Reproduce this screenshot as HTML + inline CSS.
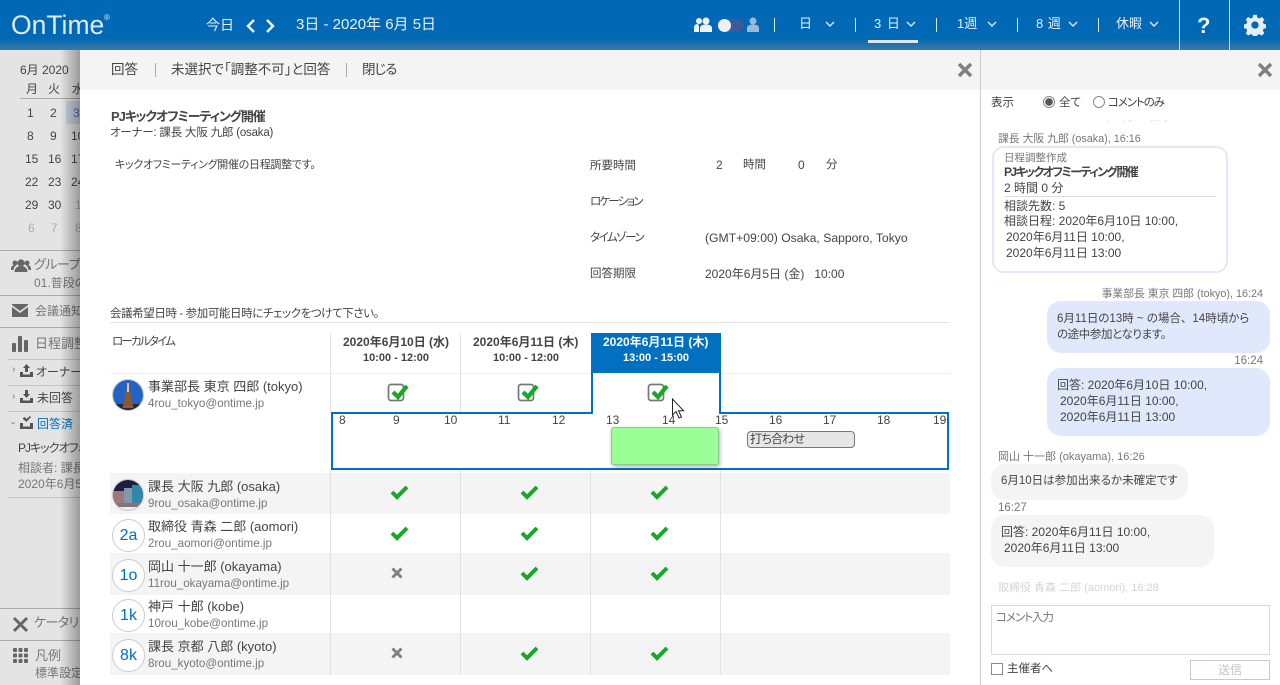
<!DOCTYPE html>
<html lang="ja"><head><meta charset="utf-8"><title>OnTime</title>
<style>
html,body{margin:0;padding:0}
body{width:1280px;height:685px;overflow:hidden;position:relative;background:#e4e4e4;font-family:"Liberation Sans","Noto Sans CJK JP",sans-serif;font-size:12px;color:#444;font-feature-settings:"palt"}
.a{position:absolute}
.t{position:absolute;white-space:nowrap;line-height:16px}
.g{color:#777}
.b{font-weight:bold}
.w{color:#e8f0f7}
.av{position:absolute;width:31px;height:31px;border-radius:50%;border:1px solid #ccc;background:#fff;color:#0070c0;font-size:16px;line-height:31px;text-align:center}
.row{position:absolute;left:110px;width:840px;background:#f4f4f4}
.vl{position:absolute;width:1px;background:#e2e2e2}
.s{position:absolute;top:18px;width:1px;height:14px;background:#dce8f2}
.n{position:absolute;top:16px;white-space:nowrap;line-height:16px;font-size:13px;color:#e8f0f7}
</style></head><body>

<!-- left background panel -->
<div class="a" style="left:0;top:50px;width:80px;height:635px;background:#e4e4e4;overflow:hidden">
  <div class="t" style="left:20px;top:12px">6月 2020</div>
  <div class="t" style="left:26px;top:31px">月</div><div class="t" style="left:48px;top:31px">火</div><div class="t" style="left:72px;top:31px">水</div>
  <div class="a" style="left:20px;top:48px;width:60px;height:1px;background:#aaa"></div>
  <div class="a" style="left:66px;top:51px;width:14px;height:23px;background:#c8d0e0"></div>
  <div class="t" style="left:27px;top:55px">1</div><div class="t" style="left:50px;top:55px">2</div><div class="t" style="left:73px;top:55px;color:#4a68a8">3</div>
  <div class="t" style="left:27px;top:78px">8</div><div class="t" style="left:50px;top:78px">9</div><div class="t" style="left:71px;top:78px">10</div>
  <div class="t" style="left:25px;top:101px">15</div><div class="t" style="left:48px;top:101px">16</div><div class="t" style="left:71px;top:101px">17</div>
  <div class="t" style="left:25px;top:124px">22</div><div class="t" style="left:48px;top:124px">23</div><div class="t" style="left:71px;top:124px">24</div>
  <div class="t" style="left:25px;top:147px">29</div><div class="t" style="left:48px;top:147px">30</div><div class="t" style="left:75px;top:147px;color:#aaa">1</div>
  <div class="t" style="left:28px;top:170px;color:#aaa">6</div><div class="t" style="left:51px;top:170px;color:#aaa">7</div><div class="t" style="left:75px;top:170px;color:#aaa">8</div>

  <div class="a" style="left:0;top:200px;width:80px;height:1px;background:#aaa"></div>
  <svg class="a" style="left:11px;top:208px" width="20" height="16" viewBox="0 0 20 16"><g fill="#666"><circle cx="10" cy="5" r="3.6"/><path d="M3.500 14c0-4 3-6 6.500-6s6.500 2 6.500 6z"/><circle cx="4" cy="5" r="2.500"/><circle cx="16" cy="5" r="2.500"/><path d="M0 11c0-2.500 1.500-4 4-4l1 .5c-1.500 1-2.500 2.500-2.500 4.500H0zM20 11c0-2.500-1.500-4-4-4l-1 .5c1.500 1 2.500 2.500 2.500 4.500H20z"/></g></svg>
  <div class="t g" style="left:34px;top:207px;font-size:13px;letter-spacing:-.5px">グループ</div>
  <div class="t g" style="left:34px;top:225px">01.普段の</div>
  <div class="a" style="left:0;top:245px;width:80px;height:1px;background:#aaa"></div>
  <svg class="a" style="left:12px;top:254px" width="16" height="13" viewBox="0 0 16 13"><path fill="#666" d="M0 1l8 6 8-6V0H0zM0 3v10h16V3L8 9z"/></svg>
  <div class="t g" style="left:35px;top:253px">会議通知</div>
  <div class="a" style="left:0;top:277px;width:80px;height:1px;background:#aaa"></div>
  <svg class="a" style="left:11px;top:285px" width="18" height="18" viewBox="0 0 18 18"><g fill="#666"><rect x="1" y="8" width="4" height="9" rx="1"/><rect x="7" y="1" width="4" height="16" rx="1"/><rect x="13" y="5" width="4" height="12" rx="1"/></g></svg>
  <div class="t g" style="left:35px;top:286px;font-size:13px">日程調整</div>
  <div class="a" style="left:8px;top:309px;width:72px;height:1px;background:#c4c4c4"></div>
  <div class="t g" style="left:12px;top:312px;font-size:10px">›</div>
  <svg class="a" style="left:20px;top:314px" width="13" height="13" viewBox="0 0 13 13"><path fill="#555" d="M6.500 0L10 4H8v4H5V4H3zM0 8h3v2.500h7V8h3v5H0z"/></svg>
  <div class="t" style="left:36px;top:314px">オーナー</div>
  <div class="a" style="left:8px;top:335px;width:72px;height:1px;background:#c4c4c4"></div>
  <div class="t g" style="left:12px;top:339px;font-size:10px">›</div>
  <svg class="a" style="left:20px;top:340px" width="13" height="13" viewBox="0 0 13 13"><path fill="#555" d="M5 0h3v4h2L6.500 8 3 4h2zM0 8h3v2.500h7V8h3v5H0z"/></svg>
  <div class="t" style="left:37px;top:340px">未回答</div>
  <div class="a" style="left:8px;top:361px;width:72px;height:1px;background:#c4c4c4"></div>
  <div class="t g" style="left:11px;top:365px;font-size:10px;transform:rotate(90deg)">›</div>
  <svg class="a" style="left:20px;top:366px" width="13" height="13" viewBox="0 0 13 13"><path fill="#555" d="M3 2l2-1 1.500 2L10 0l1 1-4.500 5L3 3zM0 7h3v3.500h7V7h3v6H0z"/></svg>
  <div class="t" style="left:37px;top:366px;color:#0070c0">回答済</div>
  <div class="t" style="left:18px;top:390px;letter-spacing:-1px">PJキックオフミ</div>
  <div class="t g" style="left:18px;top:410px">相談者: 課長</div>
  <div class="t g" style="left:18px;top:426px">2020年6月5</div>
  <div class="a" style="left:8px;top:447px;width:72px;height:1px;background:#c4c4c4"></div>
  <div class="a" style="left:0;top:558px;width:80px;height:1px;background:#aaa"></div>
  <svg class="a" style="left:12px;top:566px" width="17" height="17" viewBox="0 0 17 17"><path stroke="#666" stroke-width="3" d="M2 2l13 13M15 2L2 15"/></svg>
  <div class="t g" style="left:34px;top:565px;font-size:13px;letter-spacing:-.6px">ケータリング</div>
  <div class="a" style="left:0;top:590px;width:80px;height:1px;background:#aaa"></div>
  <svg class="a" style="left:13px;top:598px" width="15" height="15" viewBox="0 0 15 15"><g fill="#666"><rect width="4" height="4" rx="1"/><rect x="5.500" width="4" height="4" rx="1"/><rect x="11" width="4" height="4" rx="1"/><rect y="5.500" width="4" height="4" rx="1"/><rect x="5.500" y="5.500" width="4" height="4" rx="1"/><rect x="11" y="5.500" width="4" height="4" rx="1"/><rect y="11" width="4" height="4" rx="1"/><rect x="5.500" y="11" width="4" height="4" rx="1"/><rect x="11" y="11" width="4" height="4" rx="1"/></g></svg>
  <div class="t g" style="left:35px;top:598px;font-size:13px">凡例</div>
  <div class="t g" style="left:35px;top:615px">標準設定</div>
  <div class="a" style="left:60px;top:0;width:20px;height:635px;background:linear-gradient(90deg,rgba(0,0,0,0),rgba(0,0,0,.32))"></div>
</div>

<!-- header -->
<div class="a" style="left:0;top:0;width:1280px;height:50px;background:linear-gradient(#0068b4 0,#0068b4 38px,#3a78a8 50px)"></div>
<div class="t" style="left:11px;top:8px;font-size:26.500px;line-height:34px;color:#dfeaf3">OnTime</div>
<div class="t" style="left:104px;top:13px;font-size:8px;line-height:10px;color:#dfeaf3">®</div>
<div class="t w" style="left:206px;top:17px;font-size:14px">今日</div>
<svg class="a" style="left:245px;top:18px" width="32" height="16" viewBox="0 0 32 16"><path fill="none" stroke="#f0f5fa" stroke-width="2.500" d="M9 2L3 8l6 6M22 2l6 6-6 6"/></svg>
<div class="t w" style="left:296px;top:17px;font-size:15px">3日 - 2020年 6月 5日</div>
<svg class="a" style="left:694px;top:17px" width="20" height="16" viewBox="0 0 20 16"><g fill="#eef3f8"><circle cx="5" cy="4" r="3"/><path d="M0 15V10c0-2 2-3 4-3l1 2v6z"/><circle cx="12" cy="4" r="3.500"/><path d="M6 15v-4c0-2 2-3.500 6-3.500s6 1.500 6 3.500v4z"/></g></svg>
<div class="a" style="left:718px;top:19px;width:26px;height:13px;border-radius:7px;background:#3b5a9c"></div>
<div class="a" style="left:718px;top:19px;width:13px;height:13px;border-radius:50%;background:#f0f0f0"></div>
<svg class="a" style="left:745px;top:17px" width="16" height="16" viewBox="0 0 16 16"><g fill="#9db9d8"><circle cx="8" cy="4" r="3.500"/><path d="M2 15v-4c0-2 2-3.500 6-3.500s6 1.500 6 3.500v4z"/></g></svg>
<div class="s" style="left:774px"></div><div class="s" style="left:855px"></div><div class="s" style="left:936px"></div><div class="s" style="left:1017px"></div><div class="s" style="left:1098px"></div>
<div class="n" style="left:799px">日</div>
<div class="n" style="left:874px;letter-spacing:1px">3 日</div>
<div class="n" style="left:957px">1週</div>
<div class="n" style="left:1036px;letter-spacing:.5px">8 週</div>
<div class="n" style="left:1116px">休暇</div>
<svg class="a" style="left:0;top:0" width="1280" height="50" viewBox="0 0 1280 50"><g fill="none" stroke="#dce8f2" stroke-width="1.400"><path d="M826 22l4 4 4-4M907 22l4 4 4-4M988 22l4 4 4-4M1069 22l4 4 4-4M1150 22l4 4 4-4"/></g></svg>
<div class="a" style="left:868px;top:40px;width:50px;height:3px;background:#dfe6ea"></div>
<div class="a" style="left:1179px;top:0;width:1px;height:50px;background:#cfdde9"></div>
<div class="a" style="left:1229px;top:0;width:1px;height:50px;background:#cfdde9"></div>
<div class="t b" style="left:1197px;top:13px;font-size:22px;line-height:26px;color:#eef3f8">?</div>
<svg class="a" style="left:1244px;top:14px" width="22" height="22" viewBox="0 0 24 24"><path fill="#e6edf3" fill-rule="evenodd" d="M10 1h4l.6 3 2.200.9 2.600-1.700 2.800 2.800-1.700 2.600.9 2.200 3 .6v4l-3 .6-.9 2.200 1.700 2.600-2.800 2.800-2.600-1.700-2.200.9-.6 3h-4l-.6-3-2.200-.9-2.600 1.700-2.800-2.800 1.700-2.600-.9-2.200-3-.6v-4l3-.6.9-2.200-1.700-2.600 2.800-2.800 2.600 1.700 2.200-.9zM12 8a4 4 0 1 0 0 8 4 4 0 0 0 0-8z"/></svg>

<!-- modal -->
<div class="a" style="left:80px;top:50px;width:900px;height:635px;background:#fff"></div>
<div class="a" style="left:80px;top:50px;width:900px;height:40px;background:#f4f4f4"></div>
<div class="t" style="left:111px;top:62px;font-size:13.500px">回答</div>
<div class="a" style="left:155px;top:63px;width:1px;height:14px;background:#aaa"></div>
<div class="t" style="left:171px;top:62px;font-size:13.500px">未選択で「調整不可」と回答</div>
<div class="a" style="left:346px;top:63px;width:1px;height:14px;background:#aaa"></div>
<div class="t" style="left:362px;top:62px;font-size:13.500px;letter-spacing:-1px">閉じる</div>
<svg class="a" style="left:957px;top:62px" width="16" height="16" viewBox="0 0 16 16"><path stroke="#808080" stroke-width="3.500" d="M2 2l12 12M14 2L2 14"/></svg>

<div class="t b" style="left:111px;top:109px;font-size:13px;letter-spacing:-1.100px">PJキックオフミーティング開催</div>
<div class="t" style="left:110px;top:125px;font-size:11.500px;letter-spacing:-.2px">オーナー: 課長 大阪 九郎 (osaka)</div>
<div class="t" style="left:115px;top:157px;font-size:11px;letter-spacing:-.3px">キックオフミーティング開催の日程調整です。</div>

<div class="t" style="left:590px;top:158px;font-size:11.500px">所要時間</div>
<div class="t" style="left:716px;top:157px">2</div>
<div class="t" style="left:743px;top:157px;font-size:11.500px">時間</div>
<div class="t" style="left:798px;top:157px">0</div>
<div class="t" style="left:826px;top:157px;font-size:11.500px">分</div>
<div class="t" style="left:590px;top:194px;font-size:11.500px;letter-spacing:-1.800px">ロケーション</div>
<div class="t" style="left:590px;top:230px;font-size:11.500px;letter-spacing:-1.500px">タイムゾーン</div>
<div class="t" style="left:705px;top:230px;font-size:12.200px">(GMT+09:00) Osaka, Sapporo, Tokyo</div>
<div class="t" style="left:590px;top:266px;font-size:11.500px">回答期限</div>
<div class="t" style="left:705px;top:266px">2020年6月5日 (金) &nbsp; 10:00</div>

<div class="t" style="left:110px;top:306px;font-size:11.500px;letter-spacing:-.4px">会議希望日時 - 参加可能日時にチェックをつけて下さい。</div>
<div class="a" style="left:110px;top:322px;width:840px;height:1px;background:#e2e2e2"></div>

<!-- rows bg -->
<div class="a" style="left:110px;top:373px;width:840px;height:1px;background:#efefef"></div>
<div class="row" style="top:473px;height:41px"></div>
<div class="row" style="top:553px;height:42px"></div>
<div class="row" style="top:633px;height:42px"></div>
<!-- column lines -->
<div class="vl" style="left:330px;top:333px;height:80px"></div>
<div class="vl" style="left:460px;top:333px;height:80px"></div>
<div class="vl" style="left:330px;top:470px;height:205px"></div>
<div class="vl" style="left:460px;top:470px;height:205px"></div>
<div class="vl" style="left:590px;top:470px;height:205px"></div>
<div class="vl" style="left:720px;top:470px;height:205px"></div>

<div class="t" style="left:112px;top:334px;font-size:11.500px;letter-spacing:-1.800px">ローカルタイム</div>
<div class="t b" style="left:343px;top:334px">2020年6月10日 (水)</div>
<div class="t b" style="left:363px;top:350px;font-size:11px">10:00 - 12:00</div>
<div class="t b" style="left:473px;top:334px">2020年6月11日 (木)</div>
<div class="t b" style="left:493px;top:350px;font-size:11px">10:00 - 12:00</div>
<div class="a" style="left:591px;top:333px;width:130px;height:40px;background:#0070c0"></div>
<div class="t b" style="left:603px;top:334px;color:#fff">2020年6月11日 (木)</div>
<div class="t b" style="left:623px;top:350px;font-size:11px;color:#fff">13:00 - 15:00</div>

<!-- timeline frame -->
<div class="a" style="left:331px;top:412px;width:618px;height:58px;box-sizing:border-box;border:2px solid #0070c0;background:#fff"></div>
<div class="a" style="left:591px;top:373px;width:130px;height:41px;box-sizing:border-box;border:solid #0070c0;border-width:0 2px;background:#fff"></div>
<div class="t" style="left:339px;top:412px">8</div><div class="t" style="left:393px;top:412px">9</div><div class="t" style="left:444px;top:412px">10</div><div class="t" style="left:498px;top:412px">11</div><div class="t" style="left:552px;top:412px">12</div><div class="t" style="left:606px;top:412px">13</div><div class="t" style="left:662px;top:412px">14</div><div class="t" style="left:715px;top:412px">15</div><div class="t" style="left:769px;top:412px">16</div><div class="t" style="left:823px;top:412px">17</div><div class="t" style="left:877px;top:412px">18</div><div class="t" style="left:933px;top:412px">19</div>
<div class="a" style="left:611px;top:427px;width:108px;height:38px;box-sizing:border-box;background:#9bff98;border:1px solid #8cc98c;border-radius:3px;box-shadow:1px 2px 4px rgba(0,0,0,.3)"></div>
<div class="a" style="left:747px;top:431px;width:108px;height:17px;box-sizing:border-box;background:#e6e6e6;border:1px solid #777;border-radius:4px"></div>
<div class="t" style="left:750px;top:431px;letter-spacing:-.8px">打ち合わせ</div>

<!-- checkboxes -->
<svg class="a" style="left:387px;top:383px" width="22" height="19" viewBox="0 0 22 19"><rect x="1.500" y="1.500" width="15" height="16" rx="2.500" fill="none" stroke="#777" stroke-width="1.700"/><path fill="none" stroke="#17a828" stroke-width="4.200" d="M6 9l5 5 9-11"/></svg>
<svg class="a" style="left:517px;top:383px" width="22" height="19" viewBox="0 0 22 19"><rect x="1.500" y="1.500" width="15" height="16" rx="2.500" fill="none" stroke="#777" stroke-width="1.700"/><path fill="none" stroke="#17a828" stroke-width="4.200" d="M6 9l5 5 9-11"/></svg>
<svg class="a" style="left:647px;top:383px" width="22" height="19" viewBox="0 0 22 19"><rect x="1.500" y="1.500" width="15" height="16" rx="2.500" fill="none" stroke="#777" stroke-width="1.700"/><path fill="none" stroke="#17a828" stroke-width="4.200" d="M6 9l5 5 9-11"/></svg>
<svg class="a" style="left:671px;top:398px" width="14" height="22" viewBox="0 0 14 22"><path fill="#fff" stroke="#222" d="M1.500 1v16l3.500-3.500 3 6.500 2.500-1-3-6.300h5z"/></svg>

<!-- people -->
<svg class="a" style="left:112px;top:379px" width="32" height="32" viewBox="0 0 32 32"><defs><clipPath id="c1"><circle cx="16" cy="16" r="15"/></clipPath></defs><circle cx="16" cy="16" r="15.500" fill="#fff" stroke="#ccc"/><g clip-path="url(#c1)"><rect width="32" height="32" fill="#2462c4"/><rect y="25" width="32" height="7" fill="#1a2a3a"/><path fill="#8a5a30" d="M16 3l1.500 8 4 18h-11l4-18z"/><path fill="#e8c890" d="M15 4h2v9h-2z"/></g></svg>
<svg class="a" style="left:112px;top:479px" width="32" height="32" viewBox="0 0 32 32"><defs><clipPath id="c2"><circle cx="16" cy="16" r="15"/></clipPath></defs><circle cx="16" cy="16" r="15.500" fill="#fff" stroke="#ccc"/><g clip-path="url(#c2)"><rect width="32" height="24" fill="#1a2040"/><rect x="1" y="12" width="11" height="12" fill="#a07878"/><rect x="12" y="9" width="8" height="15" fill="#8098b0"/><rect x="20" y="6" width="11" height="18" fill="#3088a8"/><rect y="24" width="32" height="8" fill="#8a7078"/><rect y="28" width="32" height="4" fill="#f0f0f0"/></g></svg>
<div class="t" style="left:148px;top:379px;font-size:13px">事業部長 東京 四郎 (tokyo)</div>
<div class="t g" style="left:148px;top:396px;font-size:11.600px">4rou_tokyo@ontime.jp</div>
<div class="t" style="left:148px;top:479px;font-size:13px">課長 大阪 九郎 (osaka)</div>
<div class="t g" style="left:148px;top:496px;font-size:11.600px">9rou_osaka@ontime.jp</div>
<div class="av" style="left:112px;top:519px">2a</div>
<div class="t" style="left:148px;top:519px;font-size:13px">取締役 青森 二郎 (aomori)</div>
<div class="t g" style="left:148px;top:536px;font-size:11.600px">2rou_aomori@ontime.jp</div>
<div class="av" style="left:112px;top:559px">1o</div>
<div class="t" style="left:148px;top:559px;font-size:13px">岡山 十一郎 (okayama)</div>
<div class="t g" style="left:148px;top:576px;font-size:11.600px">11rou_okayama@ontime.jp</div>
<div class="av" style="left:112px;top:599px">1k</div>
<div class="t" style="left:148px;top:599px;font-size:13px">神戸 十郎 (kobe)</div>
<div class="t g" style="left:148px;top:616px;font-size:11.600px">10rou_kobe@ontime.jp</div>
<div class="av" style="left:112px;top:639px">8k</div>
<div class="t" style="left:148px;top:639px;font-size:13px">課長 京都 八郎 (kyoto)</div>
<div class="t g" style="left:148px;top:656px;font-size:11.600px">8rou_kyoto@ontime.jp</div>

<!-- answer marks -->
<svg class="a" style="left:330px;top:470px" width="400" height="205" viewBox="0 0 400 205"><defs><path id="k" fill="none" stroke="#17a828" stroke-width="4" d="M-8 1l5 5 10-10"/><path id="x" fill="none" stroke="#808080" stroke-width="3" d="M-4.500-4.500l9 9M4.500-4.500l-9 9"/></defs>
<use href="#k" x="70" y="21"/><use href="#k" x="200" y="21"/><use href="#k" x="330" y="21"/>
<use href="#k" x="70" y="62"/><use href="#k" x="200" y="62"/><use href="#k" x="330" y="62"/>
<use href="#x" x="67" y="103"/><use href="#k" x="200" y="102"/><use href="#k" x="330" y="102"/>
<use href="#x" x="67" y="183"/><use href="#k" x="200" y="182"/><use href="#k" x="330" y="182"/>
</svg>

<!-- right panel -->
<div class="a" style="left:980px;top:50px;width:300px;height:635px;background:#fff;border-left:1px solid #ccc;box-sizing:border-box"></div>
<div class="a" style="left:981px;top:50px;width:299px;height:40px;background:#f4f4f4"></div>
<svg class="a" style="left:1257px;top:62px" width="16" height="16" viewBox="0 0 16 16"><path stroke="#808080" stroke-width="3.500" d="M2 2l12 12M14 2L2 14"/></svg>
<div class="t" style="left:991px;top:95px;font-size:11.500px">表示</div>
<div class="a" style="left:1043px;top:96px;width:12px;height:12px;box-sizing:border-box;border-radius:50%;border:1px solid #888;background:radial-gradient(circle,#555 0 3.500px,#fff 4px)"></div>
<div class="t" style="left:1059px;top:95px;font-size:11.500px">全て</div>
<div class="a" style="left:1093px;top:96px;width:12px;height:12px;box-sizing:border-box;border-radius:50%;border:1px solid #888"></div>
<div class="t" style="left:1108px;top:95px;font-size:11.500px;letter-spacing:-1.100px">コメントのみ</div>
<div class="a" style="left:1078px;top:120px;width:90px;height:3px;overflow:hidden"><div class="t" style="left:0;top:-11px;font-size:11px;color:#cfdcf0">2020年 6月 12日 (火)</div></div>

<div class="t g" style="left:998px;top:131px;font-size:10.800px">課長 大阪 九郎 (osaka), 16:16</div>
<div class="a" style="left:992px;top:146px;width:236px;height:127px;box-sizing:border-box;border:2px solid #e0e8fb;border-radius:12px"></div>
<div class="t g" style="left:1004px;top:150px;font-size:10.500px">日程調整作成</div>
<div class="t b" style="left:1004px;top:164px;font-size:12px;letter-spacing:-1.600px">PJキックオフミーティング開催</div>
<div class="t" style="left:1004px;top:180px">2 時間 0 分</div>
<div class="a" style="left:1004px;top:196px;width:212px;height:1px;background:#ddd"></div>
<div class="t" style="left:1004px;top:198px">相談先数: 5</div>
<div class="t" style="left:1004px;top:213px">相談日程: 2020年6月10日 10:00,</div>
<div class="t" style="left:1006px;top:229px">2020年6月11日 10:00,</div>
<div class="t" style="left:1006px;top:245px">2020年6月11日 13:00</div>

<div class="t g" style="right:17px;top:286px;font-size:10.800px">事業部長 東京 四郎 (tokyo), 16:24</div>
<div class="a" style="left:1047px;top:301px;width:223px;height:52px;background:#e0e8fb;border-radius:14px"></div>
<div class="t" style="left:1057px;top:311px;font-size:11.500px">6月11日の13時 ~ の場合<span style="font-feature-settings:normal">、</span>14時頃から</div>
<div class="t" style="left:1057px;top:327px;font-size:11.500px;letter-spacing:-.4px">の途中参加となります。</div>
<div class="t g" style="right:17px;top:353px;font-size:11.500px">16:24</div>
<div class="a" style="left:1047px;top:368px;width:223px;height:68px;background:#e0e8fb;border-radius:14px"></div>
<div class="t" style="left:1057px;top:377px">回答: 2020年6月10日 10:00,</div>
<div class="t" style="left:1060px;top:393px">2020年6月11日 10:00,</div>
<div class="t" style="left:1060px;top:409px">2020年6月11日 13:00</div>

<div class="t g" style="left:998px;top:449px;font-size:11px">岡山 十一郎 (okayama), 16:26</div>
<div class="a" style="left:991px;top:464px;width:197px;height:36px;background:#f4f4f4;border-radius:14px"></div>
<div class="t" style="left:1001px;top:473px;font-size:11.500px">6月10日は参加出来るか未確定です</div>
<div class="t g" style="left:998px;top:500px;font-size:11.500px">16:27</div>
<div class="a" style="left:991px;top:515px;width:223px;height:52px;background:#f4f4f4;border-radius:14px"></div>
<div class="t" style="left:1001px;top:524px">回答: 2020年6月11日 10:00,</div>
<div class="t" style="left:1004px;top:540px">2020年6月11日 13:00</div>
<div class="t" style="left:998px;top:580px;font-size:11px;color:#d4d4d4">取締役 青森 二郎 (aomori), 16:28</div>

<div class="a" style="left:991px;top:605px;width:279px;height:50px;box-sizing:border-box;border:1px solid #d6dbe6;background:#fff"></div>
<div class="t g" style="left:996px;top:610px;font-size:11.500px;letter-spacing:-1px">コメント入力</div>
<div class="a" style="left:991px;top:663px;width:12px;height:12px;box-sizing:border-box;border:1px solid #888"></div>
<div class="t" style="left:1007px;top:661px;font-size:11.500px">主催者へ</div>
<div class="a" style="left:1190px;top:660px;width:80px;height:20px;box-sizing:border-box;border:1px solid #ccc8c0;color:#c4c4c4;text-align:center;line-height:18px">送信</div>
</body></html>
